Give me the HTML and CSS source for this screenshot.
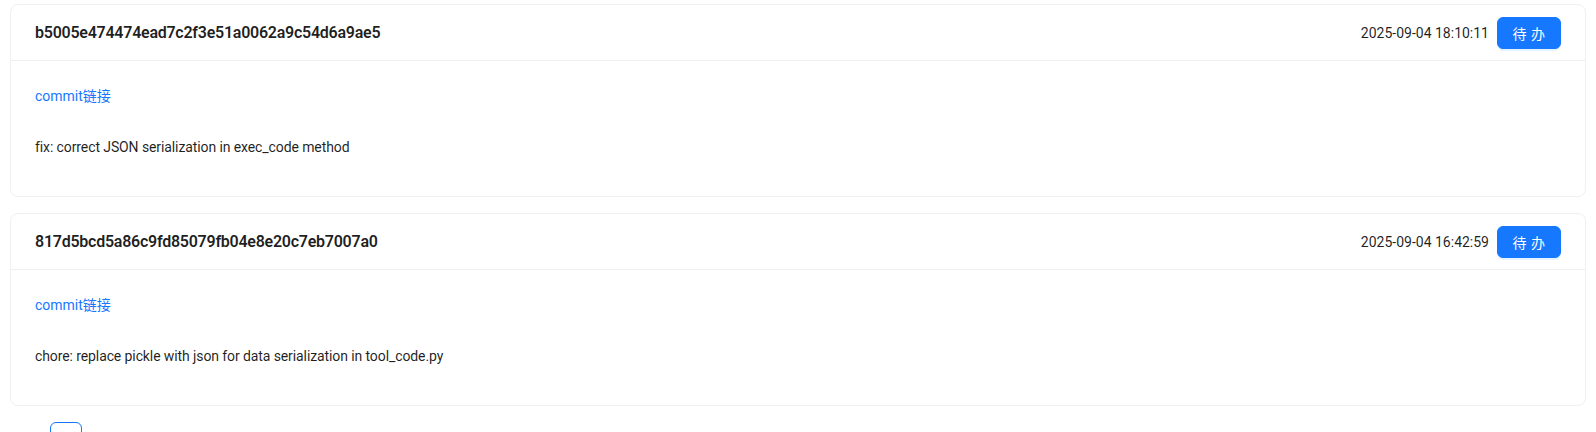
FILE: index.html
```html
<!DOCTYPE html>
<html lang="zh-CN">
<head>
<meta charset="utf-8">
<title>Commits</title>
<link rel="stylesheet" href="styles.css">
</head>
<body>
<div class="page">
  <div class="card">
    <div class="card-head">
      <div class="card-title">b5005e474474ead7c2f3e51a0062a9c54d6a9ae5</div>
      <div class="card-extra">
        <span class="date">2025-09-04 18:10:11</span>
        <button class="btn-primary" type="button">待 办</button>
      </div>
    </div>
    <div class="card-body">
      <div class="link-row"><a class="commit-link" href="#">commit链接</a></div>
      <p class="desc">fix: correct JSON serialization in exec_code method</p>
    </div>
  </div>
  <div class="card">
    <div class="card-head">
      <div class="card-title">817d5bcd5a86c9fd85079fb04e8e20c7eb7007a0</div>
      <div class="card-extra">
        <span class="date">2025-09-04 16:42:59</span>
        <button class="btn-primary" type="button">待 办</button>
      </div>
    </div>
    <div class="card-body">
      <div class="link-row"><a class="commit-link" href="#">commit链接</a></div>
      <p class="desc">chore: replace pickle with json for data serialization in tool_code.py</p>
    </div>
  </div>
  <ul class="pagination">
    <li class="page-prev"></li>
    <li class="page-item active">1</li>
  </ul>
</div>
</body>
</html>
```
FILE: styles.css
```css
* { box-sizing: border-box; }
body {
  margin: 0;
  background: #ffffff;
  font-family: Roboto, "Noto Sans CJK SC", sans-serif;
  font-size: 14px;
  line-height: 22px;
  color: rgba(0, 0, 0, 0.88);
}
.page {
  padding: 4px 10px 0;
}
.card {
  border: 1px solid #f0f0f0;
  border-radius: 8px;
  background: #fff;
  margin-bottom: 16px;
}
.card-head {
  display: flex;
  align-items: center;
  min-height: 56px;
  padding: 0 24px;
  border-bottom: 1px solid #f0f0f0;
}
.card-title {
  flex: 1;
  font-size: 16px;
  font-weight: 600;
  letter-spacing: -0.25px;
  line-height: 24px;
}
.card-extra {
  display: flex;
  align-items: center;
  gap: 8px;
}
.date {
  font-size: 14px;
}
.btn-primary {
  height: 32px;
  width: 64px;
  padding: 0;
  border: 1px solid #1677ff;
  border-radius: 6px;
  background: #1677ff;
  color: #fff;
  font-family: Roboto, "Noto Sans CJK SC", sans-serif;
  font-size: 14px;
  letter-spacing: 0.5px;
  box-shadow: 0 2px 0 rgba(5, 145, 255, 0.1);
  cursor: pointer;
}
.card-body {
  padding: 24px 24px 24px;
}
.link-row {
  margin-bottom: 29px;
}
.commit-link {
  color: #1677ff;
  text-decoration: none;
}
.desc {
  margin: 0 0 14px;
  letter-spacing: -0.1px;
}
.pagination {
  list-style: none;
  margin: 0;
  padding: 0;
  display: flex;
  gap: 8px;
}
.page-prev {
  width: 32px;
  height: 32px;
}
.page-item {
  width: 32px;
  height: 32px;
  border: 1px solid #1677ff;
  border-radius: 6px;
  text-align: center;
  line-height: 30px;
  color: #1677ff;
  font-weight: 600;
}
```
